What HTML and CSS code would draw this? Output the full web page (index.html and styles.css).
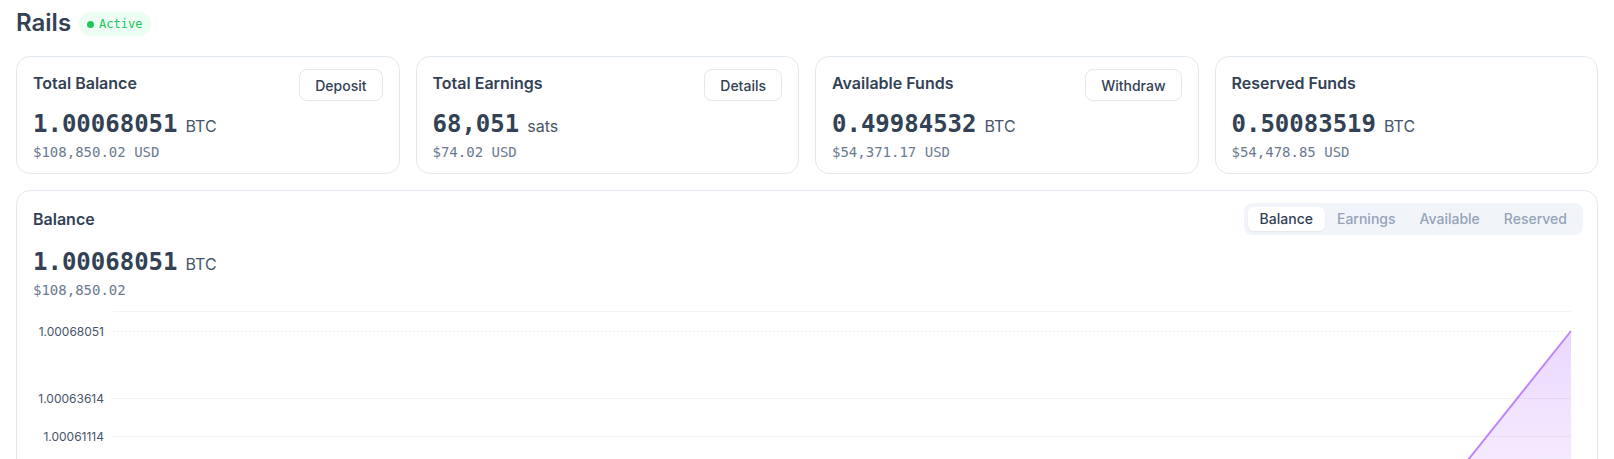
FILE: index.html
```html
<!DOCTYPE html>
<html>
<head>
<meta charset="utf-8">
<link rel="stylesheet" href="styles.css">
</head>
<body>
<div class="page">
  <header class="top">
    <h1 class="title">Rails</h1>
    <span class="badge"><span class="dot"></span>Active</span>
  </header>

  <section class="stats">
    <div class="card stat">
      <div class="card-head">
        <h2 class="card-title">Total Balance</h2>
        <button class="btn">Deposit</button>
      </div>
      <div class="value"><span class="num">1.00068051</span><span class="unit">BTC</span></div>
      <div class="usd">$108,850.02 USD</div>
    </div>
    <div class="card stat">
      <div class="card-head">
        <h2 class="card-title">Total Earnings</h2>
        <button class="btn">Details</button>
      </div>
      <div class="value"><span class="num">68,051</span><span class="unit">sats</span></div>
      <div class="usd">$74.02 USD</div>
    </div>
    <div class="card stat">
      <div class="card-head">
        <h2 class="card-title">Available Funds</h2>
        <button class="btn">Withdraw</button>
      </div>
      <div class="value"><span class="num">0.49984532</span><span class="unit">BTC</span></div>
      <div class="usd">$54,371.17 USD</div>
    </div>
    <div class="card stat">
      <div class="card-head">
        <h2 class="card-title">Reserved Funds</h2>
      </div>
      <div class="value"><span class="num">0.50083519</span><span class="unit">BTC</span></div>
      <div class="usd">$54,478.85 USD</div>
    </div>
  </section>

  <section class="card chart-card">
    <div class="chart-head">
      <h2 class="card-title">Balance</h2>
      <div class="tabs">
        <span class="tab active">Balance</span>
        <span class="tab">Earnings</span>
        <span class="tab">Available</span>
        <span class="tab">Reserved</span>
      </div>
    </div>
    <div class="value chart-value"><span class="num">1.00068051</span><span class="unit">BTC</span></div>
    <div class="usd">$108,850.02</div>
    <div class="chart">
      <svg class="chart-svg" width="1548" height="200" viewBox="0 0 1548 200">
        <defs>
          <linearGradient id="fillg" x1="0" y1="0" x2="0" y2="1">
            <stop offset="0" stop-color="#c084fc" stop-opacity="0.32"/>
            <stop offset="1" stop-color="#c084fc" stop-opacity="0.12"/>
          </linearGradient>
        </defs>
        <line x1="80" y1="11.5" x2="1538" y2="11.5" stroke="#f1f5f9" stroke-width="1"/>
        <line x1="80" y1="31.5" x2="1538" y2="31.5" stroke="#eef0f4" stroke-width="1" stroke-dasharray="2 2"/>
        <line x1="80" y1="98.5" x2="1538" y2="98.5" stroke="#eef1f5" stroke-width="1"/>
        <line x1="80" y1="136.5" x2="1538" y2="136.5" stroke="#eef1f5" stroke-width="1"/>
        <text class="axis" x="71" y="35.5" text-anchor="end">1.00068051</text>
        <text class="axis" x="71" y="102.5" text-anchor="end">1.00063614</text>
        <text class="axis" x="71" y="140.5" text-anchor="end">1.00061114</text>
        <polygon points="1538,31 1403,200 1538,200" fill="url(#fillg)"/>
        <line x1="1538" y1="31" x2="1403" y2="200" stroke="#c084fc" stroke-width="2"/>
      </svg>
    </div>
  </section>
</div>
</body>
</html>
```

FILE: styles.css
```css
* { box-sizing: border-box; }
html, body { margin: 0; padding: 0; overflow: hidden; background: #ffffff; }
body {
  font-family: Inter, "Noto Sans", "Liberation Sans", sans-serif;
  color: #334155;
}
.page { padding: 7px 16px 0 16px; }

.top {
  display: flex;
  align-items: center;
  gap: 8px;
  height: 32px;
  margin-bottom: 17px;
}
.title {
  margin: 0;
  font-size: 24px;
  line-height: 32px;
  font-weight: 600;
  color: #334155;
}
.badge {
  display: inline-flex;
  align-items: center;
  gap: 5px;
  height: 24px;
  padding: 0 9px 0 8px;
  border-radius: 999px;
  background: #ecfdf3;
  color: #22c55e;
  font-family: "DejaVu Sans Mono", "Liberation Mono", monospace;
  font-size: 12px;
  margin-top: 2px;
}
.dot { width: 7px; height: 7px; border-radius: 50%; background: #22c55e; }

.stats {
  display: grid;
  grid-template-columns: repeat(4, 1fr);
  gap: 16px;
  margin-bottom: 16px;
}
.card {
  border: 1px solid #e2e8f0;
  border-radius: 14px;
  padding: 12px 16px;
  background: #fff;
}
.card.stat { padding-bottom: 11px; }
.stat .card-title { margin-top: 2px; }
.card-head {
  display: flex;
  justify-content: space-between;
  align-items: flex-start;
  height: 32px;
}
.card-title {
  margin: 0;
  font-size: 16px;
  line-height: 24px;
  font-weight: 600;
  color: #334155;
}
.btn {
  height: 32px;
  padding: 0 15px;
  border: 1px solid #e2e8f0;
  border-radius: 8px;
  background: #fff;
  color: #334155;
  font-family: Inter, "Noto Sans", sans-serif;
  font-size: 14px;
  font-weight: 500;
}
.value {
  display: flex;
  align-items: baseline;
  gap: 8px;
  margin-top: 7px;
  line-height: 32px;
}
.num {
  font-family: "DejaVu Sans Mono", "Liberation Mono", monospace;
  font-size: 24px;
  font-weight: 700;
  color: #334155;
}
.unit {
  font-size: 16px;
  color: #475569;
}
.usd {
  font-family: "DejaVu Sans Mono", "Liberation Mono", monospace;
  font-size: 14px;
  line-height: 20px;
  color: #6b7a90;
}

.chart-card { padding-bottom: 0; }
.chart-head {
  display: flex;
  justify-content: space-between;
  align-items: center;
  height: 32px;
}
.chart-value { margin-top: 11px; }
.tabs {
  display: flex;
  padding: 4px;
  margin-right: -2px;
  background: #f1f5f9;
  border-radius: 8px;
}
.tab {
  padding: 0 12px;
  height: 24px;
  line-height: 24px;
  font-size: 14px;
  font-weight: 500;
  color: #94a3b8;
  border-radius: 6px;
}
.tab.active {
  background: #fff;
  color: #334155;
  box-shadow: 0 1px 2px rgba(15, 23, 42, 0.06);
}
.chart { height: 200px; }
.chart-svg { display: block; }
.axis {
  font-family: Inter, "Noto Sans", sans-serif;
  font-size: 12px;
  fill: #475569;
}
```
